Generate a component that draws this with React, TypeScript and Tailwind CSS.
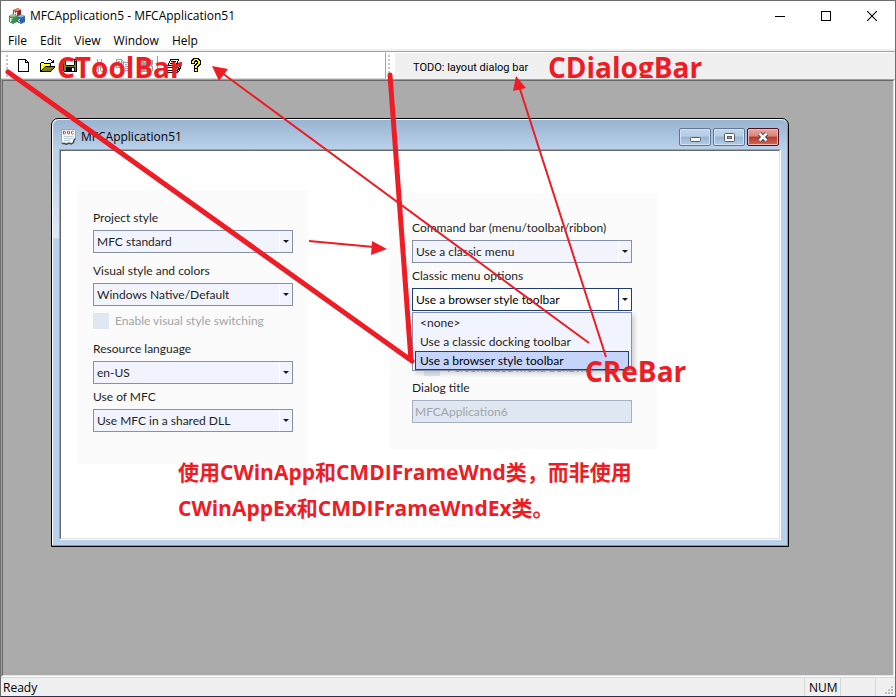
import type { ReactNode } from "react";

const UI_FONT = "font-['Open_Sans','Noto_Sans',sans-serif]";
const FORM_FONT = "font-[Lato,'Open_Sans',sans-serif]";
const DIALOG_FONT = "font-[Roboto,'Open_Sans',sans-serif]";
const NOTE_FONT = "font-['Open_Sans','Noto_Sans_CJK_SC',sans-serif]";

/* Draws a 16-wide bitmap glyph: one character per pixel, looked up in the palette. */
const PALETTE: Record<string, string> = {
  k: "#000000",
  w: "#ffffff",
  y: "#ffff00",
  o: "#808000",
  g: "#a0a0a0",
  l: "#c8c8c8",
};

function Bitmap({ rows }: { rows: string[] }) {
  const cells: ReactNode[] = [];
  rows.forEach((row, y) => {
    row.split("").forEach((c, x) => {
      if (PALETTE[c]) {
        cells.push(<rect key={`${x}-${y}`} x={x} y={y} width="1" height="1" fill={PALETTE[c]} />);
      }
    });
  });
  return (
    <svg width="16" height="16" viewBox="0 0 16 16" shapeRendering="crispEdges" aria-hidden="true">
      {cells}
    </svg>
  );
}

const NEW = [
  "",
  "..kkkkkkkk",
  "..kwwwwwwkk",
  "..kwwwwwwkwk",
  "..kwwwwwwkkkk",
  "..kwwwwwwwwwk",
  "..kwwwwwwwwwk",
  "..kwwwwwwwwwk",
  "..kwwwwwwwwwk",
  "..kwwwwwwwwwk",
  "..kwwwwwwwwwk",
  "..kwwwwwwwwwk",
  "..kwwwwwwwwwk",
  "..kkkkkkkkkkk",
];
const OPEN = [
  "",
  ".........kkk",
  "........k...k.k",
  ".............kk",
  "..kkk.......kkk",
  ".kywykkkkkkk",
  ".kwywywywywk",
  ".kywywywywyk",
  ".kwywykkkkkkkkkk",
  ".kywykoooooooook",
  ".kwykoooooooook",
  ".kykoooooooook",
  ".kkoooooooook",
  ".kkkkkkkkkkk",
];
const SAVE = [
  "",
  ".kkkkkkkkkkkkkk",
  ".kokwwwwwwwwkwk",
  ".kokwwwwwwwwkkk",
  ".kokwwwwwwwwkok",
  ".kokwwwwwwwwkok",
  ".kokwwwwwwwwkok",
  ".kookkkkkkkkook",
  ".kooooooooooook",
  ".kookkkkkkkkkok",
  ".kookkkkkkwwkok",
  ".kookkkkkkwwkok",
  ".kookkkkkkwwkok",
  "..kkkkkkkkkkkkk",
];
const CUT = [
  "",
  ".....g...g",
  ".....g...g",
  ".....g...g",
  ".....gg.gg",
  "......g.g",
  "......ggg",
  ".......g",
  "......ggg",
  "......g.ggg",
  "....ggg.g..g",
  "...g..g.g..g",
  "...g..g.g..g",
  "...g..g..gg",
  "....gg",
];
const COPY = [
  "",
  ".gggggg",
  ".g....gg",
  ".g.gg.g.g",
  ".g....ggggggg",
  ".g.gggg.g....gg",
  ".g....g.g.gg.g.g",
  ".g.gggg.g....gggg",
  ".g....g.g.ggggg.g",
  ".gggggggg.......g",
  "........g.ggggg.g",
  "........g.......g",
  "........ggggggggg",
];
const PASTE = [
  "",
  "......gggg",
  ".gggggg..gggggg",
  ".ggggg....ggggg",
  ".gggggggggggggg",
  ".gggggggggggggg",
  ".gggggggggggggg",
  ".ggggggwwwwwwg",
  ".ggggggwggggwgg",
  ".ggggggwwwwwwwg",
  ".ggggggwgggggwg",
  ".ggggggwwwwwwwg",
  ".ggggggwgggggwg",
  "..gggggggggggg",
];
const PRINT = [
  "",
  "....kkkkkkkkk",
  "....kwwwwwwwk",
  "...kwkkkkkwk",
  "...kwwwwwwwk",
  "..kwkkkkkwkkkk",
  "..kwwwwwwwk.k.k",
  ".kkkkkkkkkkk.kk",
  "k..........k.kk",
  "kkkkkkkkkkkkk.k",
  "k.......yyk.kkk",
  "k..........kkk",
  "kkkkkkkkkkkk.k",
  ".k.........kk",
  ".kkkkkkkkkkk",
];
const HELP = [
  "....kkkkkk",
  "...kkyyyykk",
  "..kkyykkyykk",
  "..kyykkkkyyk",
  "..kyyk..kyyk",
  "..kkkk.kkyyk",
  "......kkyykk",
  ".....kkyykk",
  ".....kyykk",
  ".....kyyk",
  ".....kkkk",
  ".....kyyk",
  ".....kyyk",
  ".....kkkk",
];

function ToolButton({ label, rows, disabled }: { label: string; rows: string[]; disabled?: boolean }) {
  return (
    <button type="button" aria-label={label} disabled={disabled} className="flex h-6 w-[23px] items-center justify-center">
      <Bitmap rows={rows} />
    </button>
  );
}

function Gripper() {
  return (
    <div className="flex h-full w-1 flex-col justify-center gap-[2px]">
      {[0, 1, 2, 3, 4, 5].map((i) => (
        <span key={i} className="size-[2px] bg-[#c4c4c4]" />
      ))}
    </div>
  );
}

function AppLogo() {
  return (
    <svg width="16" height="16" viewBox="0 0 16 16" aria-hidden="true">
      <path d="M4 2l5-2 3 2v5l-4 2-4-2z" fill="#c8372d" />
      <path d="M4 2l5-2 3 2-4 1z" fill="#e8847a" />
      <path d="M9 3.200l3-1.200v5l-3 1.500z" fill="#93231c" />
      <path d="M5.500 3.500v3.500M7.500 4v3.500M5.500 5.300l2 .4" stroke="#fff" strokeWidth=".9" />
      <path d="M0 8l4-2 4 2v6l-4 2-4-2z" fill="#3f8f4c" />
      <path d="M0 8l4-2 4 2-4 1z" fill="#9ccb9b" />
      <path d="M1.500 10v4M1.500 10.200l2 .4M1.500 12l1.500.3" stroke="#fff" strokeWidth=".9" />
      <path d="M8 8.500l4-2 4 1.500v6l-4 2-4-2z" fill="#2f64a8" />
      <path d="M8 8.500l4-2 4 1.500-4 1.500z" fill="#8db8e4" />
      <path d="M11 11.500c-2-1-2 2.500 0 2.500" stroke="#fff" strokeWidth=".9" fill="none" />
    </svg>
  );
}

function DocIcon() {
  return (
    <svg width="16" height="16" viewBox="0 0 16 16" aria-hidden="true">
      <path d="M.5.500h14v9l-1.500 1.500-.5 2.500-2 1.500-2-1-3 1.500-1.500-1.500-3.500.5z" fill="#f4f8f8" stroke="#9aa8aa" />
      <path d="M1 14.500h3l1 1 3-1.500 2 1 2.500-1.500.5-2.500 1.500-1.500" stroke="#3d4a50" strokeWidth="1.400" fill="none" />
      <path d="M2.500 2v3h1l1-1v-1l-1-1zM6.500 2.500v2l1 .5 1-.5v-2l-1-.5zM12.500 2.500l-1-.5-1 .5v2l1 .5 1-.5" stroke="#e02a20" strokeWidth=".9" fill="none" />
      <path d="M3 7.500h9M3 9.500h9M3 11.500h6" stroke="#b4cdd4" />
    </svg>
  );
}

function Combo({ id, label, value, gap }: { id: string; label: string; value: string; gap: string }) {
  return (
    <div className={`flex flex-col gap-1 ${gap}`}>
      <label htmlFor={id} className="h-4 leading-4">
        {label}
      </label>
      <ComboBox id={id} value={value} />
    </div>
  );
}

function ComboBox({ id, value, active }: { id: string; value: string; active?: boolean }) {
  return (
    <div
      className={`relative flex h-[23px] border ${active ? "border-[#1f3b78] bg-white text-black" : "border-[#8591a8] bg-[#f2f4fd]"}`}
    >
      <select id={id} defaultValue={value} className="w-full appearance-none bg-transparent pl-[3px] leading-5 outline-none">
        <option>{value}</option>
      </select>
      <span
        className={`pointer-events-none absolute inset-y-0 right-0 flex w-[13px] items-center justify-center border-l ${active ? "border-[#1f3b78]" : "border-white"}`}
      >
        <svg width="6" height="3" viewBox="0 0 6 3" aria-hidden="true">
          <path d="M0 0h6L3 3z" fill="#1b1b1b" />
        </svg>
      </span>
    </div>
  );
}

function MdiButton({ label, close, children }: { label: string; close?: boolean; children: ReactNode }) {
  return (
    <button
      type="button"
      aria-label={label}
      className={`flex h-[18px] w-8 items-center justify-center rounded-[2px] border ${
        close
          ? "border-[#4d1020] bg-[linear-gradient(#e8aaa2_0%,#d98378_45%,#b83a28_50%,#d0695a_100%)] shadow-[inset_0_0_0_1px_#eebab3]"
          : "border-[#5f7694] bg-[linear-gradient(#c3d6eb_0%,#b5cce5_45%,#98b4d3_50%,#b4cde8_100%)] shadow-[inset_0_0_0_1px_#d3e2f2]"
      }`}
    >
      {children}
    </button>
  );
}

function ChildWindow() {
  return (
    <section className="absolute top-[37px] left-12 flex h-[429px] w-[738px] flex-col rounded-t-[7px] border border-black bg-[#b9d1ea] shadow-[inset_-1px_-1px_0_#35b8d8,inset_1px_1px_0_#ffffff]">
      <header className="m-px mb-0 flex h-[29px] items-center rounded-t-[6px] bg-[linear-gradient(#99b4d1,#b9d1ea)] px-2 pt-[5px]">
        <DocIcon />
        <h2 className="ml-1 flex-1 text-black">MFCApplication51</h2>
        <div className="flex gap-[2px]">
          <MdiButton label="Minimize document">
            <svg width="11" height="5" className="mt-1" aria-hidden="true">
              <rect x=".5" y=".5" width="10" height="4" rx="1" fill="#fff" stroke="#535a68" />
            </svg>
          </MdiButton>
          <MdiButton label="Maximize document">
            <svg width="11" height="9" aria-hidden="true">
              <rect x=".5" y=".5" width="10" height="8" rx="1" fill="#fff" stroke="#535a68" />
              <rect x="3.500" y="3.500" width="4" height="2" fill="#9bb6d4" stroke="#535a68" />
            </svg>
          </MdiButton>
          <MdiButton label="Close document" close>
            <svg width="12" height="10" aria-hidden="true">
              <path d="M2.500 1.500l7 7M9.500 1.500l-7 7" stroke="#4a4a5c" strokeWidth="4.600" />
              <path d="M2.500 1.500l7 7M9.500 1.500l-7 7" stroke="#f4f4f4" strokeWidth="2.600" />
            </svg>
          </MdiButton>
        </div>
      </header>
      <div className="mx-px mb-[6px] flex flex-1 bg-[linear-gradient(#b9d1ea,#dde9f6_89px,#b9d1ea_90px)] bg-[length:6px_100%] bg-no-repeat pr-[6px] pl-[6px]">
        <div className="flex flex-1 border-t border-r border-b border-l border-t-[#a0a0a0] border-r-white border-b-white border-l-[#a0a0a0]">
          <div
            className={`flex flex-1 items-start justify-between border border-t-[#696969] border-r-[#e3e3e3] border-b-[#e3e3e3] border-l-[#696969] bg-white pt-[39px] pr-[122px] pl-[17px] text-[#1e1e1e] ${FORM_FONT}`}
          >
            <form className="flex h-[274px] w-[230px] flex-col bg-[#fbfbfb] px-[15px] pt-5">
              <Combo id="project-style" label="Project style" value="MFC standard" gap="" />
              <Combo id="visual-style" label="Visual style and colors" value="Windows Native/Default" gap="mt-[10px]" />
              <label className="mt-[7px] flex h-4 items-center gap-[6px] text-[#a2a4a5]">
                <input type="checkbox" disabled className="size-4 appearance-none bg-[#dfe7f3]" />
                Enable visual style switching
              </label>
              <Combo id="language" label="Resource language" value="en-US" gap="mt-3" />
              <Combo id="use-mfc" label="Use of MFC" value="Use MFC in a shared DLL" gap="mt-[5px]" />
            </form>
            <form className="mt-[3px] flex h-64 w-[267px] flex-col bg-[#fbfbfb] pt-[27px] pr-[25px] pl-[22px]">
              <Combo id="command-bar" label="Command bar (menu/toolbar/ribbon)" value="Use a classic menu" gap="" />
              <div className="relative mt-[5px] flex flex-col gap-1">
                <label htmlFor="menu-options" className="h-4 leading-4">
                  Classic menu options
                </label>
                <ComboBox id="menu-options" value="Use a browser style toolbar" active />
                <ul
                  role="listbox"
                  aria-label="Classic menu options"
                  className="absolute top-11 right-0 left-0 z-10 border border-[#8591a8] bg-[#f2f4fd] px-[2px] shadow-[3px_3px_4px_rgba(0,0,0,0.15)]"
                >
                  <li role="option" aria-selected="false" className="h-[19px] px-[5px] leading-[19px]">
                    {"<none>"}
                  </li>
                  <li role="option" aria-selected="false" className="h-[19px] px-[5px] leading-[19px]">
                    Use a classic docking toolbar
                  </li>
                  <li role="option" aria-selected="true" className="h-[19px] border border-[#1f3b78] bg-[#c5d4fb] px-1 leading-[17px] text-black">
                    Use a browser style toolbar
                  </li>
                </ul>
              </div>
              <label className="mt-[49px] ml-3 flex h-4 items-center gap-[7px] whitespace-nowrap text-[#a2a4a5]">
                <input type="checkbox" disabled className="size-4 appearance-none bg-[#dfe7f3]" />
                Personalized menu behavior
              </label>
              <label htmlFor="dialog-title" className="mt-1 h-4 leading-4">
                Dialog title
              </label>
              <input
                id="dialog-title"
                disabled
                defaultValue="MFCApplication6"
                className="mt-1 h-[23px] border border-[#a5b0c0] bg-[#dfe7f3] px-[2px] text-[#a2a4a5]"
              />
            </form>
          </div>
        </div>
      </div>
    </section>
  );
}

function Annotations() {
  return (
    <div className={`pointer-events-none absolute -inset-px z-20 overflow-hidden font-bold text-[#ee1c24] ${NOTE_FONT}`}>
      <svg width="896" height="697" className="absolute top-0 left-0" aria-hidden="true">
        <g stroke="#ee1c24">
          <path d="M8 72L412 361M390 75L411 360" strokeWidth="5" strokeLinecap="round" fill="none" />
          <path d="M309 241L374 247M589 343L222 73M606 357L519 86" strokeWidth="2" fill="none" />
        </g>
        <path d="M387 249l-16 6 1-14zM212 66l16 3-9 12zM516 76l10 12-13 3z" fill="#ee1c24" />
      </svg>
      <p className="absolute top-[50px] left-[57px] h-7 overflow-hidden text-[28px] leading-[34px] whitespace-nowrap">CToolBar</p>
      <p className="absolute top-[50px] left-[548px] h-7 overflow-hidden text-[28px] leading-[34px] whitespace-nowrap">CDialogBar</p>
      <p className="absolute top-[354px] left-[585px] text-[28px] leading-[34px] whitespace-nowrap">CReBar</p>
      <p className="absolute top-[454px] left-[178px] text-[21px] leading-9 whitespace-nowrap">
        使用CWinApp和CMDIFrameWnd类，而非使用
        <br />
        CWinAppEx和CMDIFrameWndEx类。
      </p>
    </div>
  );
}

export default function App() {
  return (
    <main className={`relative flex min-h-screen flex-col border border-[#6d6d6d] border-b-[#2c3150] bg-white text-[12px] leading-4 text-black ${UI_FONT}`}>
      <header className="flex h-[30px] items-center pl-2">
        <AppLogo />
        <h1 className="ml-[5px] flex-1">MFCApplication5 - MFCApplication51</h1>
        <button type="button" aria-label="Minimize" className="flex h-full w-[46px] items-center justify-center">
          <svg width="10" height="10" shapeRendering="crispEdges" aria-hidden="true">
            <path d="M0 5h10v1H0z" />
          </svg>
        </button>
        <button type="button" aria-label="Maximize" className="flex h-full w-[46px] items-center justify-center">
          <svg width="10" height="10" shapeRendering="crispEdges" aria-hidden="true">
            <rect x=".5" y=".5" width="9" height="9" fill="none" stroke="#000" />
          </svg>
        </button>
        <button type="button" aria-label="Close" className="flex h-full w-[46px] items-center justify-center">
          <svg width="10" height="10" aria-hidden="true">
            <path d="M0 0l10 10M10 0L0 10" stroke="#000" strokeWidth="1.100" />
          </svg>
        </button>
      </header>
      <nav className="flex h-[18px] items-end gap-[13px] pl-[7px]">
        <button type="button">File</button>
        <button type="button">Edit</button>
        <button type="button">View</button>
        <button type="button">Window</button>
        <button type="button">Help</button>
      </nav>
      <div className="h-[2px] bg-[#f0f0f0]" />
      <div className="flex h-7 items-stretch border-t border-[#a0a0a0]">
        <div className="flex w-[385px] items-center border-t border-r border-b border-t-white border-r-[#a0a0a0] border-b-[#d8d8d8] pl-[5px]">
          <Gripper />
          <div className="ml-[2px] flex items-center">
            <ToolButton label="New" rows={NEW} />
            <ToolButton label="Open" rows={OPEN} />
            <ToolButton label="Save" rows={SAVE} />
            <div className="w-[7px]" />
            <ToolButton label="Cut" rows={CUT} disabled />
            <ToolButton label="Copy" rows={COPY} disabled />
            <ToolButton label="Paste" rows={PASTE} disabled />
            <div className="h-5 w-[5px] border-l border-[#a0a0a0]" />
            <ToolButton label="Print" rows={PRINT} />
            <ToolButton label="Help" rows={HELP} />
          </div>
        </div>
        <div className="w-[2px]" />
        <Gripper />
        <div className={`ml-[3px] mt-px flex flex-1 items-center bg-[#f0f0f0] pt-[3px] pl-[18px] text-[11px] ${DIALOG_FONT}`}>TODO: layout dialog bar</div>
      </div>
      <div className="flex flex-1 border-2 border-t-[#a0a0a0] border-r-white border-b-white border-l-[#a0a0a0]">
        <div className="-m-px flex-1 border border-t-[#696969] border-r-[#e3e3e3] border-b-[#e3e3e3] border-l-[#696969] bg-[#ababab]">
          <div className="relative">
            <ChildWindow />
          </div>
        </div>
      </div>
      <footer className="flex h-[19px] items-stretch border-t border-[#d7d7d7] bg-[#f0f0f0] pl-[2px] leading-[19px]">
        <span className="flex-1">Ready</span>
        <span className="w-9 border-l border-[#d7d7d7] pl-1">NUM</span>
        <span className="w-[35px] border-l border-[#d7d7d7]" />
        <span className="flex w-5 items-end justify-end border-l border-[#d7d7d7] pr-[2px] pb-[2px]">
          <svg width="8" height="8" shapeRendering="crispEdges" aria-hidden="true">
            <path d="M6 0h2v2H6zM3 3h2v2H3zM6 3h2v2H6zM0 6h2v2H0zM3 6h2v2H3zM6 6h2v2H6z" fill="#bfbfbf" />
          </svg>
        </span>
      </footer>
      <Annotations />
    </main>
  );
}
